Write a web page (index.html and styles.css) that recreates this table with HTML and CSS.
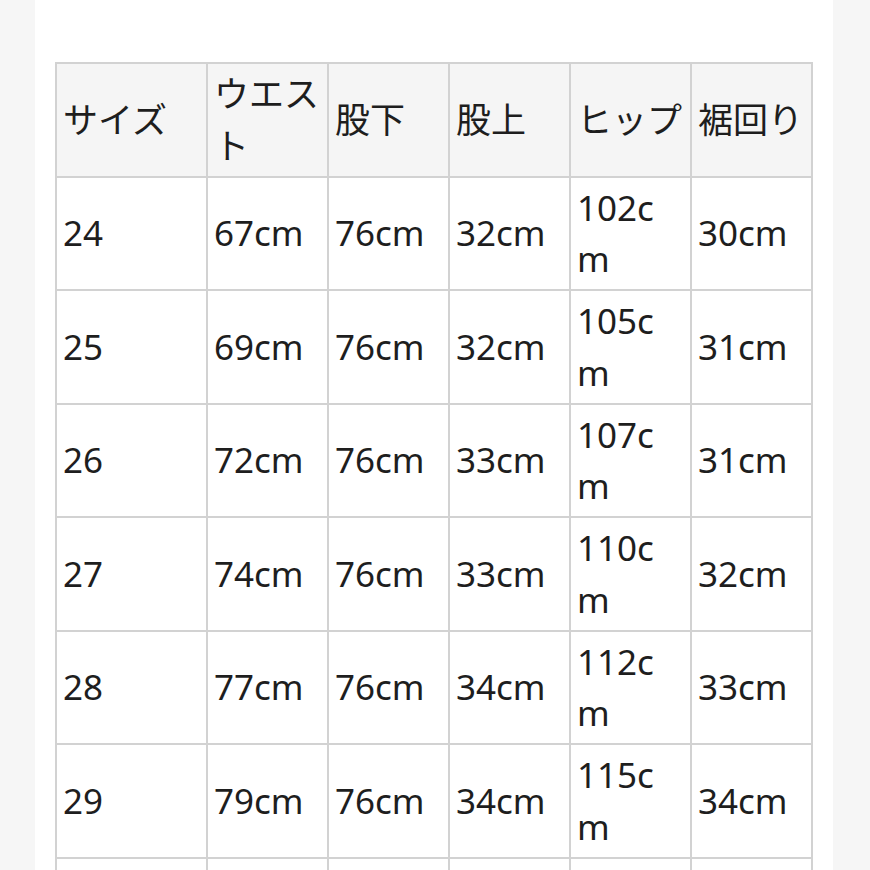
FILE: index.html
```html
<!DOCTYPE html>
<html lang="ja">
<head>
<meta charset="utf-8">
<title>サイズ表</title>
<link rel="stylesheet" href="styles.css">
</head>
<body>
<div class="page">
  <table class="size-table">
    <colgroup>
      <col class="c-size">
      <col class="c-val"><col class="c-val"><col class="c-val"><col class="c-val"><col class="c-val">
    </colgroup>
    <thead>
      <tr><th>サイズ</th><th>ウエスト</th><th>股下</th><th>股上</th><th>ヒップ</th><th>裾回り</th></tr>
    </thead>
    <tbody>
      <tr><td>24</td><td>67cm</td><td>76cm</td><td>32cm</td><td>102cm</td><td>30cm</td></tr>
      <tr><td>25</td><td>69cm</td><td>76cm</td><td>32cm</td><td>105cm</td><td>31cm</td></tr>
      <tr><td>26</td><td>72cm</td><td>76cm</td><td>33cm</td><td>107cm</td><td>31cm</td></tr>
      <tr><td>27</td><td>74cm</td><td>76cm</td><td>33cm</td><td>110cm</td><td>32cm</td></tr>
      <tr><td>28</td><td>77cm</td><td>76cm</td><td>34cm</td><td>112cm</td><td>33cm</td></tr>
      <tr><td>29</td><td>79cm</td><td>76cm</td><td>34cm</td><td>115cm</td><td>34cm</td></tr>
      <tr class="row-cut"><td></td><td></td><td></td><td></td><td></td><td></td></tr>
    </tbody>
  </table>
</div>
</body>
</html>
```
FILE: styles.css
```css
html, body {
  margin: 0;
  padding: 0;
}
body {
  background: #f6f6f6;
  height: 870px;
  overflow: hidden;
}
.page {
  margin-left: 35px;
  width: 798px;
  min-height: 870px;
  background: #ffffff;
  padding-top: 62px;
  padding-left: 20px;
  box-sizing: border-box;
}
.size-table {
  border-collapse: collapse;
  table-layout: fixed;
  width: 756px;
  font-family: "Noto Sans", "Noto Sans CJK JP", sans-serif;
  font-size: 35px;
  line-height: 51.75px;
  color: #1e1e1e;
}
.c-size { width: 151px; }
.c-val { width: 121px; }
.size-table th,
.size-table td {
  border: 2px solid #d2d2d2;
  padding: 4px 6px 4px 6px;
  text-align: left;
  vertical-align: middle;
  font-weight: normal;
  word-break: break-all;
}
.size-table th {
  background: #f5f5f5;
}
.row-cut td {
  height: 104px;
}
```
